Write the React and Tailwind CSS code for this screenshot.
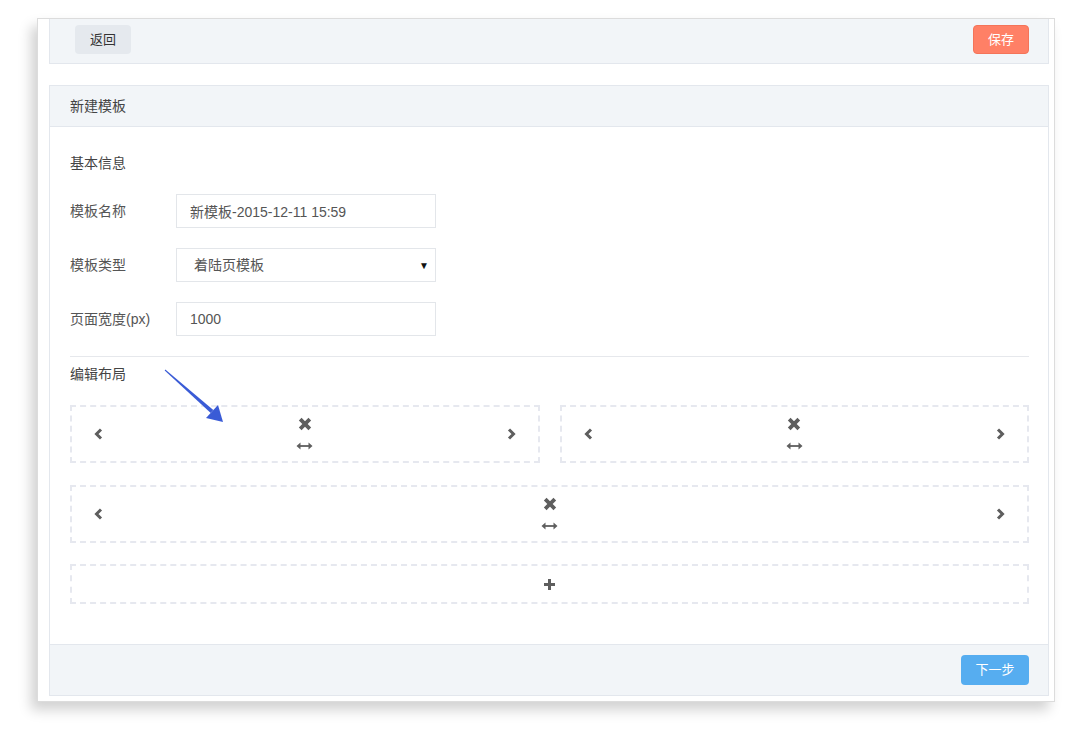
import React from 'react';

const ChevronLeft = () => (
  <svg width="9" height="12" viewBox="0 0 9 12">
    <path d="M7 1.5 L2.5 6 L7 10.5" fill="none" stroke="#5e5e5e" strokeWidth="3" />
  </svg>
);

const ChevronRight = () => (
  <svg width="9" height="12" viewBox="0 0 9 12">
    <path d="M2 1.5 L6.5 6 L2 10.5" fill="none" stroke="#5e5e5e" strokeWidth="3" />
  </svg>
);

const Cross = () => (
  <svg width="14" height="14" viewBox="0 0 14 14">
    <path d="M2.2 2.2 L11.8 11.8 M11.8 2.2 L2.2 11.8" fill="none" stroke="#5e5e5e" strokeWidth="3.8" />
  </svg>
);

const ArrowsH = () => (
  <svg width="17" height="8" viewBox="0 0 17 8">
    <path d="M4 4 H13" stroke="#5e5e5e" strokeWidth="1.8" />
    <path d="M0.5 4 L4.5 0.5 V7.5 Z M16.5 4 L12.5 0.5 V7.5 Z" fill="#5e5e5e" />
  </svg>
);

const Plus = () => (
  <svg width="13" height="13" viewBox="0 0 13 13">
    <path d="M6.5 1 V12 M1 6.5 H12" stroke="#5e5e5e" strokeWidth="3" />
  </svg>
);

function Controls() {
  return (
    <div className="flex flex-col items-center gap-[11px] pb-[2px]">
      <Cross />
      <ArrowsH />
    </div>
  );
}

function LayoutBox({ className = '' }) {
  return (
    <div className={`h-[58px] border-2 border-dashed border-[#e6e8ef] flex items-center justify-between px-[22px] ${className}`}>
      <ChevronLeft />
      <Controls />
      <ChevronRight />
    </div>
  );
}

function Row({ label, children }) {
  return (
    <div className="flex items-center h-[34px]">
      <div className="w-[106px] text-[14px] text-[#555]">{label}</div>
      {children}
    </div>
  );
}

export default function App() {
  return (
    <div
      className="relative min-h-screen bg-white pt-[18px] pl-[37px]"
      style={{ fontFamily: '"Liberation Sans", "Noto Sans CJK SC", sans-serif' }}
    >
      <div className="w-[1018px] bg-white border border-[#dcdcdc] pl-[11px] pr-[5px] pb-[5px] shadow-[-6px_8px_12px_rgba(0,0,0,0.18)]">
        <div className="h-[45px] bg-[#f2f5f8] border border-t-0 border-[#e3e7ed] flex items-start justify-between pt-[6px] pl-[25px] pr-[19px]">
          <button className="w-[56px] h-[29px] rounded-[4px] bg-[#e5e9ee] text-[13px] text-[#333]">返回</button>
          <button className="w-[56px] h-[29px] rounded-[4px] bg-[#ff8066] border border-[#f47459] text-[13px] text-white">保存</button>
        </div>

        <div className="mt-[21px] border border-[#e3e7ed]">
          <div className="h-[41px] bg-[#f2f5f8] border-b border-[#e3e7ed] flex items-center px-[20px] text-[14px] text-[#444]">
            新建模板
          </div>

          <div className="pt-[26px] pl-[20px] pr-[19px] pb-[40px]">
            <div className="h-[20px] leading-[20px] text-[14px] text-[#444]">基本信息</div>

            <div className="mt-[21px] flex flex-col gap-[20px]">
              <Row label="模板名称">
                <input
                  readOnly
                  defaultValue="新模板-2015-12-11 15:59"
                  className="w-[260px] h-[34px] border border-[#e3e6ea] px-[13px] text-[14px] text-[#555] outline-none"
                />
              </Row>
              <Row label="模板类型">
                <div className="w-[260px] h-[34px] border border-[#e3e6ea] pl-[17px] pr-[6px] flex items-center justify-between text-[14px] text-[#555]">
                  <span>着陆页模板</span>
                  <span className="text-[10px] text-[#111]">▼</span>
                </div>
              </Row>
              <Row label="页面宽度(px)">
                <input
                  readOnly
                  defaultValue="1000"
                  className="w-[260px] h-[34px] border border-[#e3e6ea] px-[13px] text-[14px] text-[#555] outline-none"
                />
              </Row>
            </div>

            <div className="mt-[20px] border-t border-[#e6e8ec]" />

            <div className="mt-[7px] h-[20px] leading-[20px] text-[14px] text-[#444]">编辑布局</div>

            <div className="mt-[21px] grid grid-cols-2 gap-[20px]">
              <LayoutBox />
              <LayoutBox />
            </div>
            <LayoutBox className="mt-[22px]" />
            <div className="mt-[21px] h-[40px] border-2 border-dashed border-[#e6e8ef] flex items-center justify-center">
              <Plus />
            </div>
          </div>

          <div className="h-[51px] bg-[#f2f5f8] border-t border-[#e3e7ed] flex items-center justify-end pr-[19px]">
            <button className="w-[68px] h-[30px] rounded-[4px] bg-[#56adf0] text-[13px] text-white">下一步</button>
          </div>
        </div>
      </div>

      <svg className="absolute left-[160px] top-[365px]" width="70" height="62" viewBox="0 0 70 62">
        <polygon points="4.7,5.4 5.3,4.6 53.3,45 50.7,48" fill="#3a5bd6" />
        <polygon points="63,57 46,53 58,40" fill="#3a5bd6" />
      </svg>
    </div>
  );
}
